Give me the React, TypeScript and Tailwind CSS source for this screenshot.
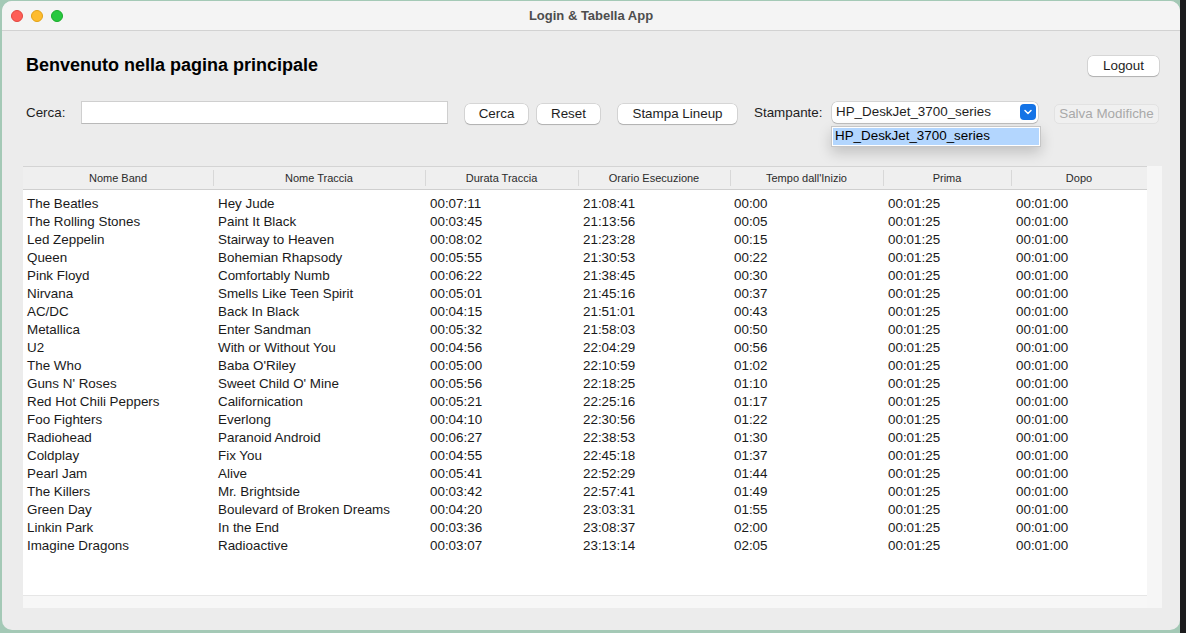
import { ChevronDown } from "lucide-react";

const rows = [
  ["The Beatles", "Hey Jude", "00:07:11", "21:08:41", "00:00"],
  ["The Rolling Stones", "Paint It Black", "00:03:45", "21:13:56", "00:05"],
  ["Led Zeppelin", "Stairway to Heaven", "00:08:02", "21:23:28", "00:15"],
  ["Queen", "Bohemian Rhapsody", "00:05:55", "21:30:53", "00:22"],
  ["Pink Floyd", "Comfortably Numb", "00:06:22", "21:38:45", "00:30"],
  ["Nirvana", "Smells Like Teen Spirit", "00:05:01", "21:45:16", "00:37"],
  ["AC/DC", "Back In Black", "00:04:15", "21:51:01", "00:43"],
  ["Metallica", "Enter Sandman", "00:05:32", "21:58:03", "00:50"],
  ["U2", "With or Without You", "00:04:56", "22:04:29", "00:56"],
  ["The Who", "Baba O'Riley", "00:05:00", "22:10:59", "01:02"],
  ["Guns N' Roses", "Sweet Child O' Mine", "00:05:56", "22:18:25", "01:10"],
  ["Red Hot Chili Peppers", "Californication", "00:05:21", "22:25:16", "01:17"],
  ["Foo Fighters", "Everlong", "00:04:10", "22:30:56", "01:22"],
  ["Radiohead", "Paranoid Android", "00:06:27", "22:38:53", "01:30"],
  ["Coldplay", "Fix You", "00:04:55", "22:45:18", "01:37"],
  ["Pearl Jam", "Alive", "00:05:41", "22:52:29", "01:44"],
  ["The Killers", "Mr. Brightside", "00:03:42", "22:57:41", "01:49"],
  ["Green Day", "Boulevard of Broken Dreams", "00:04:20", "23:03:31", "01:55"],
  ["Linkin Park", "In the End", "00:03:36", "23:08:37", "02:00"],
  ["Imagine Dragons", "Radioactive", "00:03:07", "23:13:14", "02:05"],
];

const columns = [
  { title: "Nome Band", w: "w-[190px]", pad: "pl-[4px]" },
  { title: "Nome Traccia", w: "w-[212px]", pad: "pl-[5px]" },
  { title: "Durata Traccia", w: "w-[153px]", pad: "pl-[5px]" },
  { title: "Orario Esecuzione", w: "w-[152px]", pad: "pl-[5px]" },
  { title: "Tempo dall'Inizio", w: "w-[153px]", pad: "pl-[4px]" },
  { title: "Prima", w: "w-[128px]", pad: "pl-[5px]" },
  { title: "Dopo", w: "w-[136px]", pad: "pl-[5px]" },
];

const MacButton = ({ label, w, disabled }: { label: string; w: string; disabled?: boolean }) => (
  <button
    className={`${w} h-[20px] rounded-[5px] text-[13.4px] leading-none flex items-center justify-center ${
      disabled
        ? "bg-[#f0f0f0] text-[#a9a9a9] border border-[#e2e2e2]"
        : "bg-white text-[#1e1e1e] shadow-[0_0_0_0.5px_rgba(0,0,0,0.18),0_1px_1px_rgba(0,0,0,0.18)]"
    }`}
  >
    {label}
  </button>
);

const App = () => {
  return (
    <div
      className="w-[1186px] h-[633px] overflow-hidden bg-[linear-gradient(to_right,#a4c9b6_0px,#a4c9b6_1180px,#1c1c1e_1180px)]"
      style={{ fontFamily: '"Liberation Sans", Arial, sans-serif' }}
    >
      <div className="ml-[2px] mt-[1px] w-[1178px] h-[629px] rounded-[10px] overflow-hidden bg-[#ececec] flex flex-col">
        {/* title bar */}
        <div className="h-[30px] shrink-0 bg-[#f4f4f4] border-b border-[#d2d2d2] relative flex items-center justify-center">
          <div className="absolute left-[9px] top-[9px] flex gap-[8px]">
            <div className="w-[12px] h-[12px] rounded-full bg-[#fe5f57] border border-[#e2463f]" />
            <div className="w-[12px] h-[12px] rounded-full bg-[#febc2e] border border-[#e1a116]" />
            <div className="w-[12px] h-[12px] rounded-full bg-[#28c840] border border-[#1aab29]" />
          </div>
          <span className="text-[13px] font-bold text-[#4d4d4d]">Login &amp; Tabella App</span>
        </div>

        {/* heading row */}
        <div className="mt-[23px] h-[22px] flex items-center justify-between pl-[24px] pr-[21px]">
          <h1 className="text-[18px] font-bold text-black leading-none">Benvenuto nella pagina principale</h1>
          <div className="mt-[2px]">
            <MacButton label="Logout" w="w-[71px]" />
          </div>
        </div>

        {/* search row */}
        <div className="mt-[24px] h-[24px] flex items-center pl-[24px] text-[13.4px] text-[#1e1e1e] relative">
          <span className="w-[55px] mt-[3px]">Cerca:</span>
          <div className="w-[367px] h-[23px] bg-white border border-[#cfcfcf] border-b-[#b9b9b9]" />
          <div className="ml-[17px] mt-[4px] flex gap-[9px]">
            <MacButton label="Cerca" w="w-[63px]" />
            <MacButton label="Reset" w="w-[63px]" />
          </div>
          <div className="ml-[18px] mt-[4px]">
            <MacButton label="Stampa Lineup" w="w-[119px]" />
          </div>
          <span className="ml-[17px] w-[78px] mt-[3px]">Stampante:</span>
          <div className="w-[206px] h-[21px] bg-white rounded-[5px] shadow-[0_0_0_0.5px_rgba(0,0,0,0.2),0_1px_1px_rgba(0,0,0,0.12)] flex items-center justify-between pl-[4px] pr-[2px]">
            <span>HP_DeskJet_3700_series</span>
            <span className="w-[16px] h-[16px] rounded-[4px] bg-[#1473e6] flex items-center justify-center">
              <ChevronDown size={12} strokeWidth={3} color="white" />
            </span>
          </div>
          <div className="ml-[16px] mt-[4px]">
            <MacButton label="Salva Modifiche" w="w-[105px]" disabled />
          </div>
          {/* open dropdown list */}
          <div className="absolute left-[829px] top-[26px] w-[210px] h-[21px] bg-white border border-[#c6c6c6] shadow-[0_6px_14px_rgba(0,0,0,0.18)] p-[1px]">
            <div className="h-full bg-[#b3d6fe] flex items-center pl-[2px] text-[13.4px] text-black">
              HP_DeskJet_3700_series
            </div>
          </div>
        </div>

        {/* table */}
        <div className="mt-[42px] ml-[21px] w-[1139px] h-[442px] flex">
          <div className="w-[1124px] flex flex-col">
            <div className="h-[24px] bg-[#efefef] border-t border-[#d4d4d4] border-b border-b-[#cfcfcf] flex">
              {columns.map((c, i) => (
                <div
                  key={c.title}
                  className={`${c.w} h-full flex items-center justify-center text-[11px] text-[#2b2b2b] relative`}
                >
                  {i > 0 && <div className="absolute left-0 top-[3px] bottom-[3px] w-px bg-[#d8d8d8]" />}
                  {c.title}
                </div>
              ))}
            </div>
            <div className="flex-1 bg-white pt-[5px]">
              {rows.map((r) => {
                const cells = [...r, "00:01:25", "00:01:00"];
                return (
                  <div key={r[0]} className="h-[18px] flex items-center text-[13.4px] text-[#1a1a1a]">
                    {cells.map((v, i) => (
                      <div key={i} className={`${columns[i].w} ${columns[i].pad} whitespace-nowrap`}>
                        {v}
                      </div>
                    ))}
                  </div>
                );
              })}
            </div>
            <div className="h-[13px] bg-[#f7f7f7] border-t border-[#e6e6e6]" />
          </div>
          <div className="w-[15px] bg-[#f6f6f6]" />
        </div>
      </div>
    </div>
  );
};

export default App;
